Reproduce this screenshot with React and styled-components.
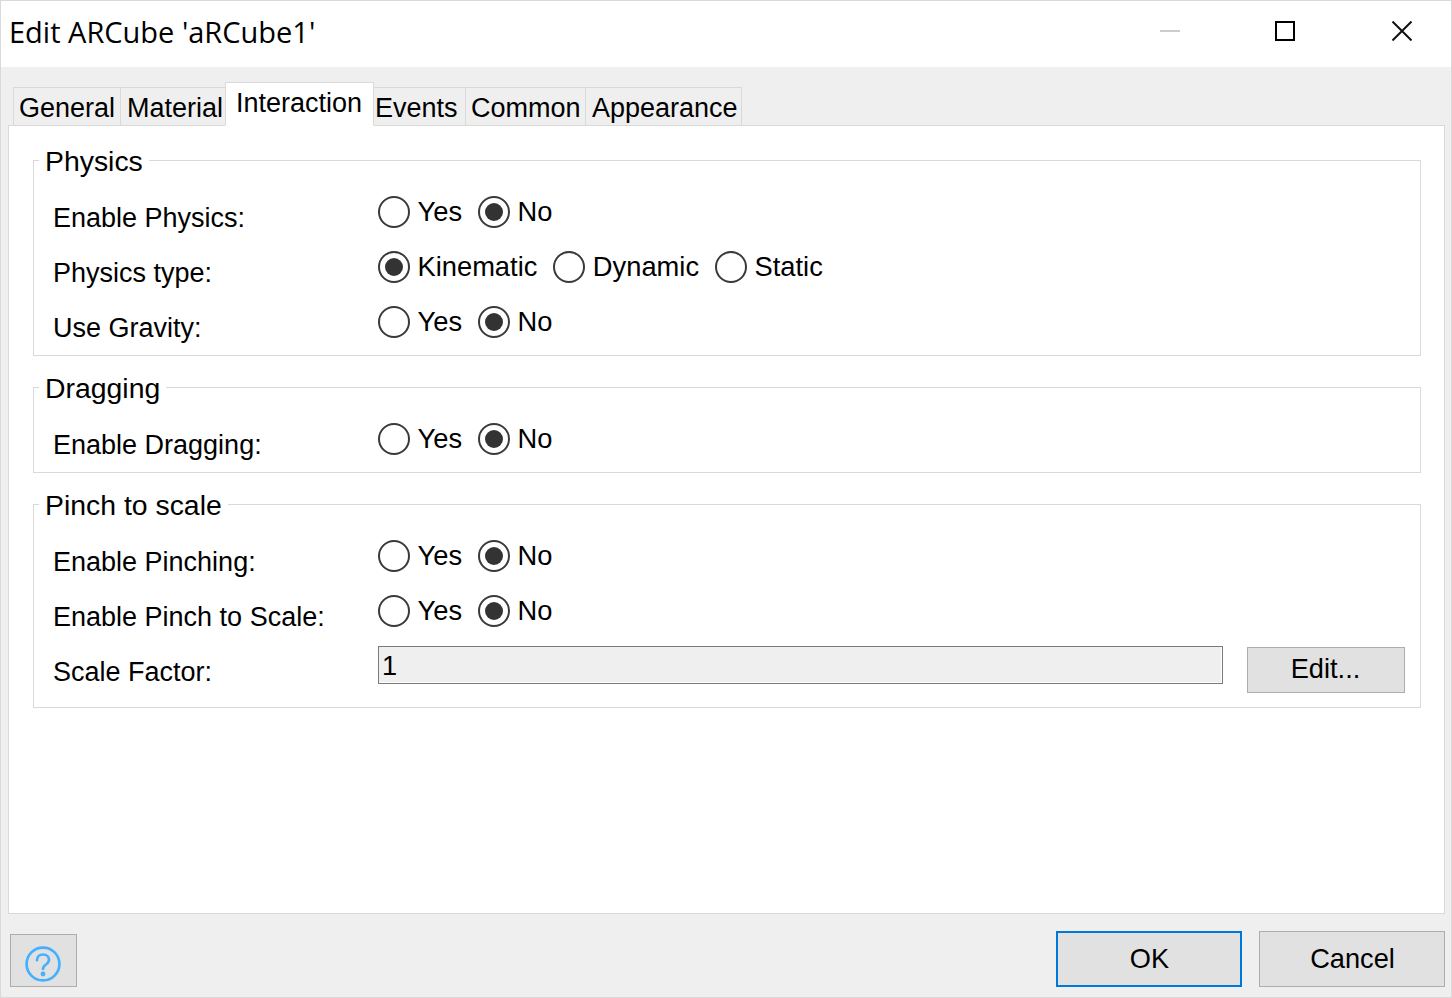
import React from "react";
import styled, { createGlobalStyle } from "styled-components";

const Global = createGlobalStyle`
  html, body { margin: 0; padding: 0; background: #fff; }
  body { font-family: "Liberation Sans", Arial, sans-serif; color: #000; }
  * { box-sizing: border-box; }
`;

const Win = styled.div`
  width: 1452px; height: 998px; display: flex; flex-direction: column;
  border: 1px solid #d9d9d9; background: #efefef; overflow: hidden;
`;
const TitleBar = styled.div`
  height: 66px; flex: none; background: #fff; display: flex; align-items: center; padding: 0 39px 0 8px;
`;
const Title = styled.div`
  flex: 1; font-family: "Open Sans", "Noto Sans", sans-serif; font-size: 29px; position: relative; top: -3px; white-space: nowrap;
`;
const WinControls = styled.div`display: flex; align-items: center; gap: 97px; position: relative; top: -3px;`;
const WinIcon = styled.svg`width: 20px; height: 20px; display: block; flex: none;`;
const MinIcon = styled(WinIcon)`margin-right: -2px;`;

const Body = styled.div`flex: 1; display: flex; flex-direction: column; padding: 0 6px 0 7px;`;
const TabBar = styled.div`height: 59px; flex: none; display: flex; align-items: flex-end; padding-left: 5px; position: relative; z-index: 1; margin-bottom: -1px;`;
const Tab = styled.div`
  width: ${p => p.$w}px; height: ${p => (p.$active ? 44 : 39)}px; flex: none;
  border: 1px solid #d9d9d9; margin-right: -1px;
  border-bottom: ${p => (p.$active ? "1px solid #fff" : "1px solid #d9d9d9")};
  background: ${p => (p.$active ? "#fff" : "#efefef")};
  font-size: 27px; line-height: 40px; padding-left: ${p => p.$pl}px; white-space: nowrap;
  position: relative; z-index: ${p => (p.$active ? 2 : 1)};
`;
const Panel = styled.div`
  height: 789px; flex: none; background: #fff; border: 1px solid #d9d9d9; padding: 34px 23px 0 24px;
  display: flex; flex-direction: column; gap: 31px;
`;
const Group = styled.div`
  border: 1px solid #d9d9d9; padding: 24px 0 ${p => p.$pb}px 19px; position: relative;
`;
const Legend = styled.div`
  position: absolute; left: 5px; top: -17px; height: 32px; line-height: 34px; padding: 0 6px; background: #fff; font-size: 28.4px; white-space: nowrap;
`;
const Row = styled.div`height: 55px; display: flex; align-items: center;`;
const Label = styled.div`width: 325px; flex: none; font-size: 27px; position: relative; top: 6px; white-space: nowrap;`;
const Radios = styled.div`display: flex; align-items: center; gap: 16px; position: relative; top: -0.5px;`;
const RadioItem = styled.div`display: flex; align-items: center; gap: 7.5px; font-size: 27.3px; white-space: nowrap;`;
const RadioMark = styled.span`
  width: 32px; height: 32px; border-radius: 50%; border: 2px solid #3a3a3a; background: #fff; display: flex; align-items: center; justify-content: center; flex: none;
  &::after { content: ""; width: 18px; height: 18px; border-radius: 50%; background: ${p => (p.$on ? "#333" : "transparent")}; }
`;
const RadioText = styled.span`display: block;`;
const FieldRow = styled.div`height: 55px; display: flex; align-items: flex-start; padding-top: 7px;`;
const FieldLabel = styled(Label)`align-self: center; top: 2px;`;
const ReadOnly = styled.div`
  width: 845px; height: 38px; flex: none; border: 1px solid #7a7a7a; background: #efefef; box-shadow: inset -1px -1px 0 #fff;
  font-size: 27.2px; line-height: 38px; padding-left: 3px;
`;
const Btn = styled.div`
  background: #e1e1e1; border: ${p => (p.$focus ? "2px solid #0078d7" : "1px solid #adadad")}; display: flex; align-items: center; justify-content: center;
  font-size: 27.2px; flex: none; width: ${p => p.$w}px; height: ${p => p.$h}px; padding: 0 0 0 1px;
`;
const EditBtn = styled(Btn)`margin-left: 24px; margin-top: 1px; padding: 0 1px 2px 0;`;
const HelpBtn = styled(Btn)`padding: 6px 2px 0 0;`;
const Footer = styled.div`flex: 1; display: flex; align-items: flex-end; justify-content: space-between; padding: 0 0 10px 2px;`;
const FootRight = styled.div`display: flex; gap: 17px;`;

function Radio({ on, children }) {
  return (
    <RadioItem>
      <RadioMark $on={on} />
      <RadioText>{children}</RadioText>
    </RadioItem>
  );
}
function YesNo({ label }) {
  return (
    <Row>
      <Label>{label}</Label>
      <Radios>
        <Radio>Yes</Radio>
        <Radio on>No</Radio>
      </Radios>
    </Row>
  );
}
const tabs = [["General", 108, 5], ["Material", 106, 6], ["Interaction", 149, 10], ["Events", 93, 1], ["Common", 121, 5], ["Appearance", 157, 6]];

export default function App() {
  return (
    <Win>
      <Global />
      <TitleBar>
        <Title>Edit ARCube 'aRCube1'</Title>
        <WinControls>
          <MinIcon viewBox="0 0 20 20"><path d="M0 10h20" stroke="#cccccc" strokeWidth="2" /></MinIcon>
          <WinIcon viewBox="0 0 20 20"><rect x="1" y="1" width="18" height="18" fill="none" stroke="#000" strokeWidth="2" /></WinIcon>
          <WinIcon viewBox="0 0 20 20"><path d="M0.5 0.5l19 19M19.5 0.5l-19 19" stroke="#111" strokeWidth="2" fill="none" /></WinIcon>
        </WinControls>
      </TitleBar>
      <Body>
        <TabBar>
          {tabs.map(([t, w, pl]) => <Tab key={t} $w={w} $pl={pl} $active={t === "Interaction"}>{t}</Tab>)}
        </TabBar>
        <Panel>
          <Group $pb={5}>
            <Legend>Physics</Legend>
            <YesNo label="Enable Physics:" />
            <Row>
              <Label>Physics type:</Label>
              <Radios>
                <Radio on>Kinematic</Radio>
                <Radio>Dynamic</Radio>
                <Radio>Static</Radio>
              </Radios>
            </Row>
            <YesNo label="Use Gravity:" />
          </Group>
          <Group $pb={5}>
            <Legend>Dragging</Legend>
            <YesNo label="Enable Dragging:" />
          </Group>
          <Group $pb={13}>
            <Legend>Pinch to scale</Legend>
            <YesNo label="Enable Pinching:" />
            <YesNo label="Enable Pinch to Scale:" />
            <FieldRow>
              <FieldLabel>Scale Factor:</FieldLabel>
              <ReadOnly>1</ReadOnly>
              <EditBtn $w={158} $h={46}>Edit...</EditBtn>
            </FieldRow>
          </Group>
        </Panel>
        <Footer>
          <HelpBtn $w={67} $h={53}>
            <svg width="36" height="36" viewBox="0 0 36 36" fill="none">
              <circle cx="18" cy="18" r="16.4" stroke="#45b0ff" strokeWidth="2.7" />
              <path d="M12 14.2c0-3.4 2.6-5.7 6-5.7s6 2.2 6 5.3c0 2.3-1.3 3.5-3 4.7-1.8 1.2-3 2.2-3 4.5" stroke="#45b0ff" strokeWidth="2.7" strokeLinecap="round" />
              <circle cx="18" cy="28" r="2.4" fill="#45b0ff" />
            </svg>
          </HelpBtn>
          <FootRight>
            <Btn $focus $w={186} $h={56}>OK</Btn>
            <Btn $w={186} $h={56}>Cancel</Btn>
          </FootRight>
        </Footer>
      </Body>
    </Win>
  );
}
